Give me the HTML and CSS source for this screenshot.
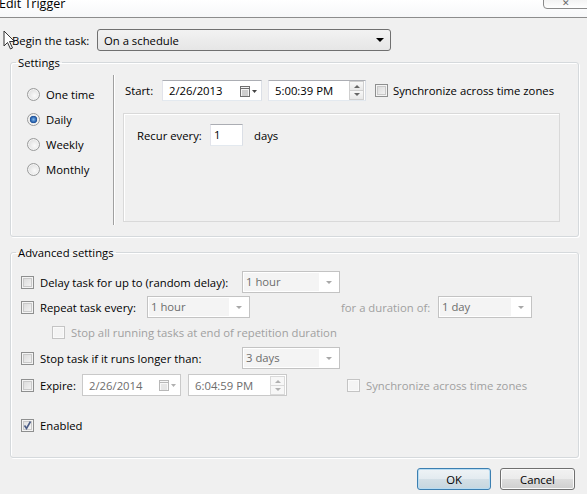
FILE: index.html
```html
<!DOCTYPE html>
<html>
<head>
<meta charset="utf-8">
<link rel="stylesheet" href="styles.css">
</head>
<body>
<div class="titlebar">
  <span class="title">Edit Trigger</span>
  <div class="close"><span class="close-x">✕</span></div>
</div>

<div class="begin-row">
  <span class="begin-label">Begin the task:</span>
  <div class="combo-main"><span>On a schedule</span><span class="arrow-black"></span></div>
</div>

<fieldset class="group">
  <legend>Settings</legend>
  <div class="settings-body">
    <div class="radios">
      <div class="radio-row"><span class="radio"></span><span>One time</span></div>
      <div class="radio-row"><span class="radio checked"></span><span>Daily</span></div>
      <div class="radio-row"><span class="radio"></span><span>Weekly</span></div>
      <div class="radio-row"><span class="radio"></span><span>Monthly</span></div>
    </div>
    <div class="vsep"></div>
    <div class="schedule">
      <div class="start-row">
        <span class="start-label">Start:</span>
        <div class="picker date">
          <span class="picker-text">2/26/2013</span>
          <span class="cal-btn">
            <svg width="20" height="12" viewBox="0 0 20 12"><rect x="1.5" y="1.5" width="9" height="10" fill="#f4f4f4" stroke="#6f6f6f"/><line x1="1.5" y1="3.5" x2="10.5" y2="3.5" stroke="#6f6f6f"/><line x1="3" y1="6" x2="9" y2="6" stroke="#a8a8a8"/><line x1="3" y1="8" x2="9" y2="8" stroke="#a8a8a8"/><line x1="3" y1="10" x2="9" y2="10" stroke="#a8a8a8"/><path d="M13 5 L18 5 L15.5 8 Z" fill="#444"/></svg>
          </span>
        </div>
        <div class="picker time">
          <span class="picker-text">5:00:39 PM</span>
          <span class="spin"><span class="spin-up"></span><span class="spin-down"></span></span>
        </div>
        <span class="cb start-cb"></span>
        <span class="cb-label">Synchronize across time zones</span>
      </div>
      <div class="recur-panel">
        <div class="recur-row">
          <span class="recur-label">Recur every:</span>
          <div class="textbox">1</div>
          <span class="days">days</span>
        </div>
      </div>
    </div>
  </div>
</fieldset>

<fieldset class="group adv">
  <legend>Advanced settings</legend>
  <div class="adv-body">
    <div class="row r1">
      <span class="cb"></span>
      <span class="lbl w202">Delay task for up to (random delay):</span>
      <div class="dcombo w98"><span class="dtext">1 hour</span><span class="darrow"></span></div>
    </div>
    <div class="row r2">
      <span class="cb"></span>
      <span class="lbl w107">Repeat task every:</span>
      <div class="dcombo w103"><span class="dtext">1 hour</span><span class="darrow"></span></div>
      <span class="lbl dis for-label">for a duration of:</span>
      <div class="dcombo w94"><span class="dtext">1 day</span><span class="darrow"></span></div>
    </div>
    <div class="row r3">
      <span class="cb disabled"></span>
      <span class="lbl dis">Stop all running tasks at end of repetition duration</span>
    </div>
    <div class="row r4">
      <span class="cb"></span>
      <span class="lbl w202">Stop task if it runs longer than:</span>
      <div class="dcombo w98"><span class="dtext">3 days</span><span class="darrow"></span></div>
    </div>
    <div class="row r5">
      <span class="cb"></span>
      <span class="lbl w42">Expire:</span>
      <div class="picker dpicker">
        <span class="picker-text">2/26/2014</span>
        <span class="cal-btn">
          <svg width="20" height="12" viewBox="0 0 20 12"><rect x="1.5" y="1.5" width="9" height="10" fill="#f8f8f8" stroke="#b8b8b8"/><line x1="1.5" y1="3.5" x2="10.5" y2="3.5" stroke="#b8b8b8"/><line x1="3" y1="6" x2="9" y2="6" stroke="#d4d4d4"/><line x1="3" y1="8" x2="9" y2="8" stroke="#d4d4d4"/><line x1="3" y1="10" x2="9" y2="10" stroke="#d4d4d4"/><path d="M13 5 L18 5 L15.5 8 Z" fill="#b0b0b0"/></svg>
        </span>
      </div>
      <div class="picker dpicker tpicker">
        <span class="picker-text">6:04:59 PM</span>
        <span class="spin dspin"><span class="spin-up"></span><span class="spin-down"></span></span>
      </div>
      <span class="cb disabled exp-cb"></span>
      <span class="lbl dis">Synchronize across time zones</span>
    </div>
    <div class="row r6">
      <span class="cb checked">
        <svg width="11" height="11" viewBox="0 0 11 11"><path d="M2.5 5.5 L4.5 8.5 L8.5 1.5" fill="none" stroke="#4c5d86" stroke-width="1.6"/></svg>
      </span>
      <span class="lbl">Enabled</span>
    </div>
  </div>
</fieldset>

<div class="buttons">
  <div class="btn ok">OK</div>
  <div class="btn cancel">Cancel</div>
</div>

<svg class="cursor" width="14" height="21" viewBox="0 0 14 21"><path d="M1 1 L1 16 L4.5 12.5 L7.5 19 L9.5 18 L6.5 11.5 L11.5 11.5 Z" fill="#fff" stroke="#333" stroke-width="1" stroke-linejoin="round"/></svg>
</body>
</html>
```

FILE: styles.css
```css
* { box-sizing: border-box; }
html, body { margin: 0; padding: 0; }
body {
  width: 587px;
  height: 494px;
  overflow: hidden;
  background: #f0f0f0;
  font-family: "Open Sans", "Segoe UI", sans-serif;
  font-size: 11.3px;
  color: #000;
  position: relative;
}

.titlebar {
  height: 18px;
  background: linear-gradient(#ffffff, #f6f7f9);
  border-bottom: 1px solid #8c8c8c;
  position: relative;
  overflow: hidden;
}
.title {
  display: block;
  font-size: 12.5px;
  line-height: 14px;
  margin-top: -3px;
  margin-left: -1px;
}
.close {
  position: absolute;
  right: -2px;
  top: -3px;
  width: 46px;
  height: 12px;
  border: 1px solid #8a8a8a;
  border-radius: 0 0 0 4px;
  background: linear-gradient(#f0f0f0, #ffffff);
  text-align: center;
}
.close-x { font-size: 9px; line-height: 9px; color: #666; display: block; }

.begin-row {
  display: flex;
  align-items: center;
  margin: 11px 0 0 12px;
  height: 22px;
}
.begin-label { width: 85px; }
.combo-main {
  width: 294px;
  height: 22px;
  border: 1px solid #707070;
  border-radius: 3px;
  background: linear-gradient(#f2f2f2, #e6e6e6);
  display: flex;
  align-items: center;
  padding: 0 6px 0 6px;
}
.arrow-black {
  margin-left: auto;
  width: 0; height: 0;
  border-left: 4px solid transparent;
  border-right: 4px solid transparent;
  border-top: 4px solid #000;
}

.group {
  margin: 4px 0 0 10px;
  width: 569px;
  padding: 0;
  min-width: 0;
  border: 1px solid #d5d9dc;
  border-radius: 3px;
  box-shadow: inset 1px 1px 0 #fff, 1px 1px 0 #fff;
}
.group legend {
  padding: 0 2px;
  margin-left: 5px;
  line-height: 15px;
}
.adv { margin-top: 8px; }

.settings-body { display: flex; padding: 5px 0 11px 0; }
.radios {
  width: 102px;
  padding: 7px 0 0 16px;
  display: flex;
  flex-direction: column;
}
.radio-row { height: 25px; display: flex; align-items: center; gap: 6px; }
.radio {
  width: 13px; height: 13px;
  border-radius: 50%;
  border: 1px solid #9a9b9b;
  background: radial-gradient(circle at 60% 60%, #fafafa 0%, #e6e6e6 55%, #cdcdcd 100%);
  box-shadow: inset 0 0 0 1px #f4f4f4;
}
.radio.checked {
  background: radial-gradient(circle, #7fb8ec 0%, #2a62ad 35%, #1d4f96 45%, #e4e4e4 50%, #f2f2f2 70%, #c9c9c9 100%);
}
.vsep {
  width: 2px;
  height: 150px;
  border-left: 1px solid #a0a0a0;
  border-right: 1px solid #ffffff;
}
.schedule { padding: 5px 0 0 8px; }
.start-row { display: flex; align-items: center; height: 21px; }
.start-label { margin-left: 2px; width: 37px; }
.picker {
  height: 21px;
  background: #fff;
  border: 1px solid #abadb3;
  border-color: #abadb3 #dbdfe6 #e3e9ef #e2e3ea;
  display: flex;
  align-items: center;
  padding-left: 6px;
}
.picker.date { width: 100px; }
.picker.time { width: 98px; margin-left: 6px; }
.picker-text { flex: 1; }
.cal-btn { width: 22px; height: 12px; display: flex; }
.spin {
  width: 15px;
  height: 19px;
  display: flex;
  flex-direction: column;
  margin-right: 1px;
}
.spin-up, .spin-down {
  flex: 1;
  border: 1px solid #cfcfcf;
  background: linear-gradient(#f8f8f8, #e8e8e8);
  position: relative;
}
.spin-down { border-top: none; }
.spin-up::after, .spin-down::after {
  content: "";
  position: absolute;
  left: 4px;
  top: 3px;
  border-left: 3px solid transparent;
  border-right: 3px solid transparent;
}
.spin-up::after { border-bottom: 3px solid #666; }
.spin-down::after { border-top: 3px solid #666; top: 2px; }
.dspin .spin-up, .dspin .spin-down { border-color: #dadada; background: #f7f7f7; }
.dspin .spin-up::after { border-bottom-color: #b0b0b0; }
.dspin .spin-down::after { border-top-color: #b0b0b0; }

.cb {
  width: 13px; height: 13px;
  flex: none;
  border: 1px solid #8e8f8f;
  background: linear-gradient(135deg, #d6d6d6, #f8f8f8);
  box-shadow: inset 0 0 0 1px #f4f4f4, inset 0 0 0 2px #c9c9c9;
  margin-right: 6px;
  display: flex;
  align-items: center;
  justify-content: center;
}
.cb.disabled {
  border-color: #c4c4c4;
  background: #f4f4f4;
  box-shadow: inset 0 0 0 1px #fafafa;
}
.cb.checked { background: linear-gradient(135deg, #dcdcdc, #fbfbfb); }
.start-cb { margin-left: 9px; margin-right: 5px; }

.recur-panel {
  margin-top: 12px;
  width: 437px;
  height: 109px;
  border: 1px solid #d9d9d9;
  box-shadow: inset 1px 1px 0 #fff;
  padding: 10px 0 0 13px;
}
.recur-row { display: flex; align-items: center; height: 22px; }
.recur-label { width: 73px; }
.textbox {
  width: 33px;
  height: 22px;
  background: #fff;
  border: 1px solid #abadb3;
  border-color: #abadb3 #dbdfe6 #e3e9ef #e2e3ea;
  padding: 2px 0 0 3px;
}
.days { margin-left: 11px; }

.adv-body { display: flex; flex-direction: column; padding: 11px 0 23px 10px; }
.row { display: flex; align-items: center; }
.r1 { height: 22px; }
.r2 { height: 22px; margin-top: 3px; }
.r3 { height: 20px; margin-top: 4px; padding-left: 31px; }
.r4 { height: 22px; margin-top: 5px; }
.r5 { height: 22px; margin-top: 5px; }
.r6 { height: 18px; margin-top: 20px; }
.lbl { white-space: nowrap; }
.w202 { width: 202px; }
.w107 { width: 107px; }
.w42 { width: 42px; }
.dis { color: #a0a0a0; }
.for-label { margin-left: 91px; width: 97px; }

.dcombo {
  height: 22px;
  border: 1px solid #c3c3c3;
  background: #fff;
  display: flex;
  align-items: center;
  color: #6d6d6d;
}
.dtext {
  flex: 1;
  height: 18px;
  line-height: 18px;
  background: #f4f4f4;
  margin-left: 1px;
  padding-left: 2px;
}
.darrow {
  width: 20px;
  display: flex;
  justify-content: center;
}
.darrow::after {
  content: "";
  border-left: 3px solid transparent;
  border-right: 3px solid transparent;
  border-top: 3px solid #a8a8a8;
}
.w98 { width: 98px; }
.w103 { width: 103px; }
.w94 { width: 94px; }

.dpicker {
  width: 99px;
  height: 22px;
  border: 1px solid #c9c9c9;
  color: #6d6d6d;
}
.tpicker { margin-left: 7px; }
.exp-cb { margin-left: 60px; }

.buttons {
  display: flex;
  justify-content: flex-end;
  gap: 9px;
  margin-top: 10px;
  padding-right: 12px;
}
.btn {
  height: 22px;
  border-radius: 3px;
  display: flex;
  align-items: center;
  justify-content: center;
}
.ok {
  width: 74px;
  border: 1px solid #3c7fb1;
  background: linear-gradient(#eef3f6 0%, #e3ebf0 50%, #d3dfe6 51%, #c6d6df 100%);
  box-shadow: inset 0 0 0 1px #b8dcf2;
}
.cancel {
  width: 75px;
  border: 1px solid #707070;
  background: linear-gradient(#f2f2f2 0%, #ebebeb 50%, #dddddd 51%, #cfcfcf 100%);
  box-shadow: inset 0 0 0 1px #fbfbfb;
}

.cursor { position: absolute; left: 3px; top: 30px; }
```
